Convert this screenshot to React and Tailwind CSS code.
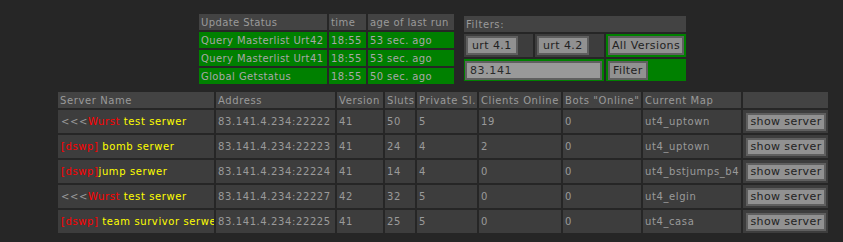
const servers = [
  { pre: '<<<', tag: 'Wurst', name: ' test serwer', addr: '83.141.4.234:22222', ver: '41', slots: '50', priv: '5', clients: '19', bots: '0', map: 'ut4_uptown' },
  { pre: '', tag: '[dswp]', name: ' bomb serwer', addr: '83.141.4.234:22223', ver: '41', slots: '24', priv: '4', clients: '2', bots: '0', map: 'ut4_uptown' },
  { pre: '', tag: '[dswp]', name: 'jump serwer', addr: '83.141.4.234:22224', ver: '41', slots: '14', priv: '4', clients: '0', bots: '0', map: 'ut4_bstjumps_b4' },
  { pre: '<<<', tag: 'Wurst', name: ' test serwer', addr: '83.141.4.234:22227', ver: '42', slots: '32', priv: '5', clients: '0', bots: '0', map: 'ut4_elgin' },
  { pre: '', tag: '[dswp]', name: ' team survivor serwer', addr: '83.141.4.234:22225', ver: '41', slots: '25', priv: '5', clients: '0', bots: '0', map: 'ut4_casa' },
];

const updates = [
  ['Query Masterlist Urt42', '18:55', '53 sec. ago'],
  ['Query Masterlist Urt41', '18:55', '53 sec. ago'],
  ['Global Getstatus', '18:55', '50 sec. ago'],
];

const columns = [
  ['Server Name', 'w-[156px]'],
  ['Address', 'w-[119px]'],
  ['Version', 'w-[46px]'],
  ['Sluts', 'w-[30px]'],
  ['Private Sl.', 'w-[60px]'],
  ['Clients Online', 'w-[82px]'],
  ['Bots "Online"', 'w-[78px]'],
  ['Current Map', 'w-[98px]'],
  ['', 'w-[85px]'],
];

const btn = 'bg-[#919191] border-2 border-[#5f5f5f] text-[#222222] leading-none text-[11px] tracking-[0.4px]';
const cell = 'bg-[#3d3d3d] px-[2px] whitespace-nowrap overflow-hidden';

export default function App() {
  return (
    <div className="min-h-[242px] w-[843px] bg-[#262626] text-[10px] tracking-[0.6px] text-[#9a9a9a] font-['DejaVu_Sans',Verdana,sans-serif]">
      {/* top: status + filters */}
      <div className="flex items-start pl-[197px] pt-[12px]">
        <table className="w-[259px] border-separate border-spacing-[2px] table-fixed tracking-[0.4px]">
          <colgroup>
            <col className="w-[128px]" />
            <col className="w-[37px]" />
            <col className="w-[86px]" />
          </colgroup>
          <thead>
            <tr className="h-[16px]">
              <th className="bg-[#434343] px-[2px] text-left font-normal whitespace-nowrap overflow-hidden">Update Status</th>
              <th className="bg-[#434343] px-[2px] text-left font-normal whitespace-nowrap overflow-hidden">time</th>
              <th className="bg-[#434343] px-[2px] text-left font-normal whitespace-nowrap overflow-hidden">age of last run</th>
            </tr>
          </thead>
          <tbody>
            {updates.map((u, i) => (
              <tr key={i} className="h-[16px]">
                <td className="bg-[#008000] px-[2px] whitespace-nowrap overflow-hidden text-[#a8a8a8]">{u[0]}</td>
                <td className="bg-[#008000] px-[2px] whitespace-nowrap overflow-hidden text-[#a8a8a8]">{u[1]}</td>
                <td className="bg-[#008000] px-[2px] whitespace-nowrap overflow-hidden text-[#a8a8a8]">{u[2]}</td>
              </tr>
            ))}
          </tbody>
        </table>

        <table className="ml-[6px] mt-[2px] w-[226px] border-separate border-spacing-[2px] table-fixed">
          <colgroup>
            <col className="w-[69px]" />
            <col className="w-[69px]" />
            <col className="w-[80px]" />
          </colgroup>
          <thead>
            <tr className="h-[16px]">
              <th colSpan={3} className="bg-[#434343] px-[2px] text-left font-normal">Filters:</th>
            </tr>
          </thead>
          <tbody>
            <tr className="h-[23px]">
              <td className="bg-[#3d3d3d] px-[2px]">
                <button className={`${btn} h-[19px] px-[4px]`}>urt 4.1</button>
              </td>
              <td className="bg-[#3d3d3d] px-[2px]">
                <button className={`${btn} h-[19px] px-[4px]`}>urt 4.2</button>
              </td>
              <td className="bg-[#008000] px-[2px]">
                <button className={`${btn} h-[19px] w-full whitespace-nowrap`}>All Versions</button>
              </td>
            </tr>
            <tr className="h-[22px]">
              <td colSpan={2} className="bg-[#008000] px-[1px]">
                <div className="h-[19px] w-[137px] bg-[#999999] border-2 border-[#5f5f5f] pl-[3px] text-[11px] leading-[15px] text-[#2a2a2a]">83.141</div>
              </td>
              <td className="bg-[#008000] px-[2px]">
                <button className={`${btn} h-[19px] px-[3px]`}>Filter</button>
              </td>
            </tr>
          </tbody>
        </table>
      </div>

      {/* server list */}
      <table className="ml-[56px] mt-[4px] w-[774px] border-separate border-spacing-[2px] table-fixed">
        <colgroup>
          {columns.map(([h, w], i) => (
            <col key={i} className={w} />
          ))}
        </colgroup>
        <thead>
          <tr className="h-[16px]">
            {columns.map(([h], i) => (
              <th key={i} className="bg-[#434343] px-[2px] text-left font-normal whitespace-nowrap overflow-hidden">{h}</th>
            ))}
          </tr>
        </thead>
        <tbody>
          {servers.map((s, i) => (
            <tr key={i} className="h-[23px]">
              <td className={`${cell} px-[3px]`}>
                {s.pre && <span className="text-[#9a9a9a]">{s.pre}</span>}
                <span className="text-[#ff0000]">{s.tag}</span>
                <span className="text-[#ffff00]">{s.name}</span>
              </td>
              <td className={cell}>{s.addr}</td>
              <td className={cell}>{s.ver}</td>
              <td className={cell}>{s.slots}</td>
              <td className={cell}>{s.priv}</td>
              <td className={cell}>{s.clients}</td>
              <td className={cell}>{s.bots}</td>
              <td className={cell}>{s.map}</td>
              <td className="bg-[#3d3d3d] px-[3px]">
                <button className={`${btn} h-[18px] w-[80px]`}>show server</button>
              </td>
            </tr>
          ))}
        </tbody>
      </table>
    </div>
  );
}
